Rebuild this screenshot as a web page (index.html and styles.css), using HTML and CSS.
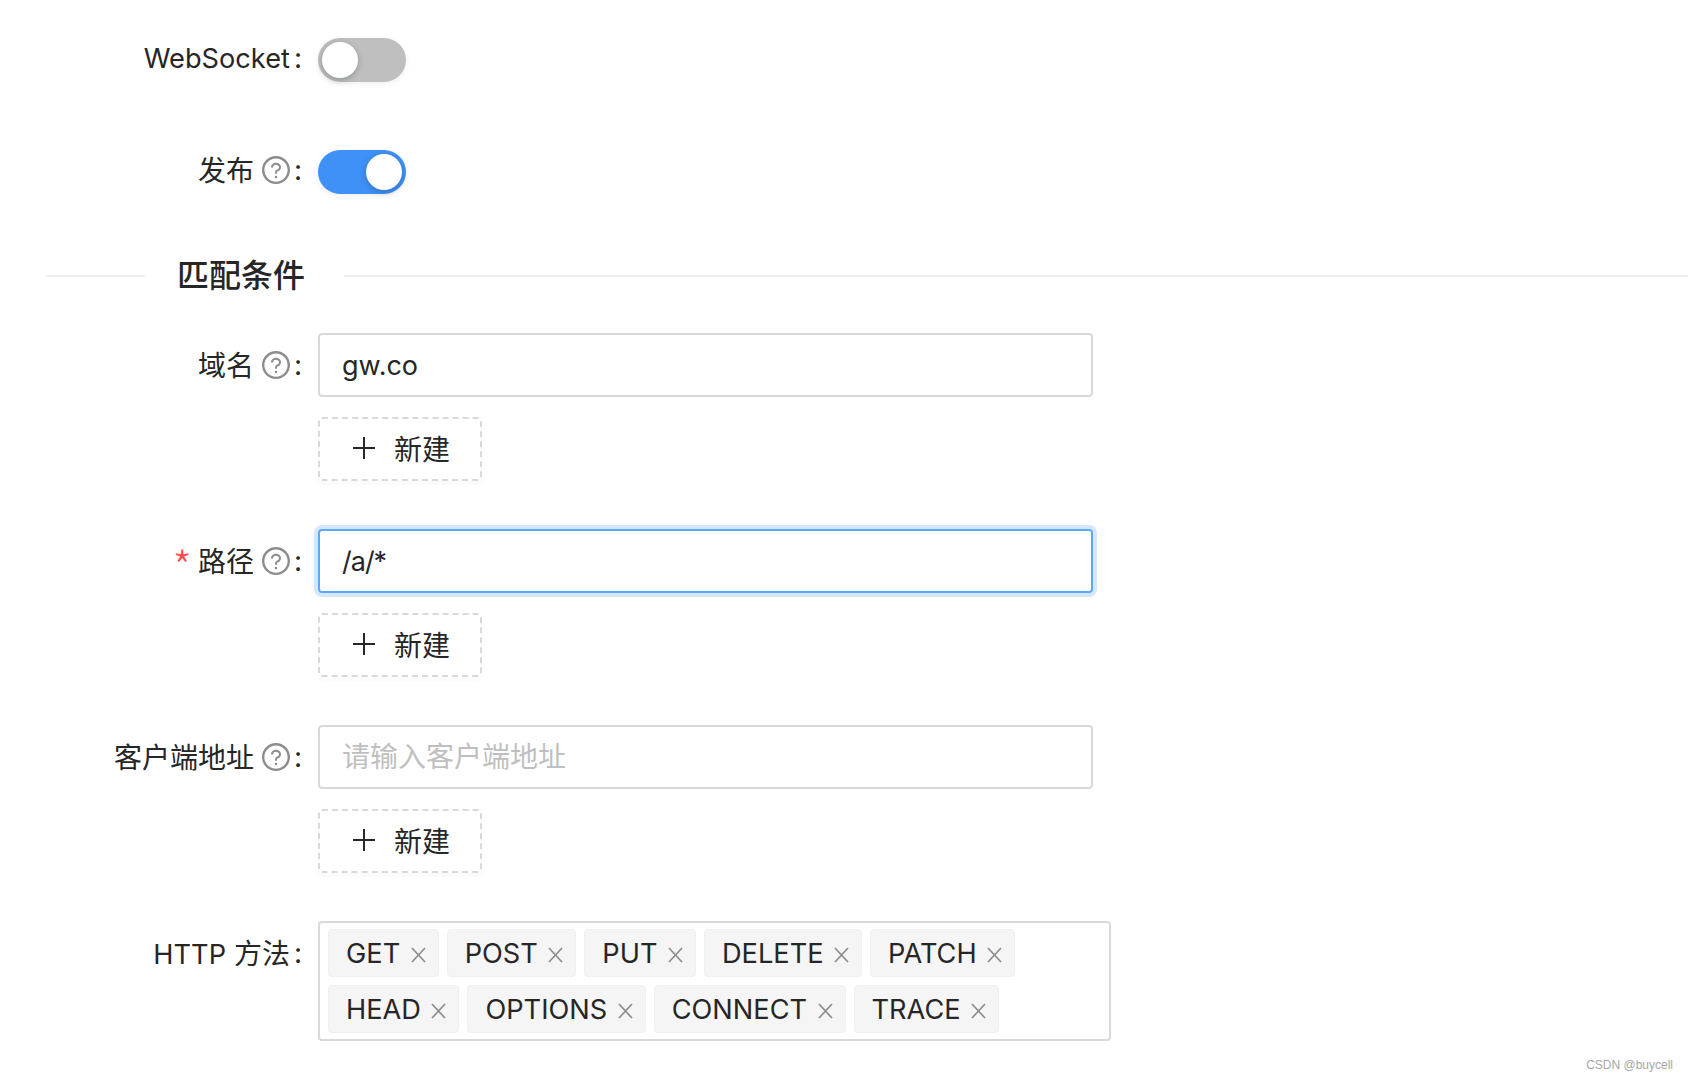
FILE: index.html
```html
<!DOCTYPE html>
<html lang="zh-CN">
<head>
<meta charset="utf-8">
<title>匹配条件</title>
<link rel="stylesheet" href="styles.css">
</head>
<body>
<svg class="sprite" aria-hidden="true">
  <symbol id="help" viewBox="64 64 896 896">
    <path d="M512 64C264.6 64 64 264.6 64 512s200.6 448 448 448 448-200.6 448-448S759.4 64 512 64zm0 820c-205.4 0-372-166.6-372-372s166.6-372 372-372 372 166.6 372 372-166.6 372-372 372z"/>
    <path d="M623.6 316.7C593.6 290.4 554 276 512 276s-81.6 14.5-111.6 40.7C369.2 344 352 380.7 352 420v7.6c0 4.4 3.6 8 8 8h48c4.4 0 8-3.6 8-8V420c0-44.1 43.1-80 96-80s96 35.9 96 80c0 31.1-22 59.6-56.1 72.7-21.2 8.1-39.2 22.3-52.1 40.9-13.1 19-19.9 41.8-19.9 64.9V620c0 4.4 3.6 8 8 8h48c4.4 0 8-3.6 8-8v-22.7a48.3 48.3 0 0 1 30.9-44.8c59-22.7 97.1-74.7 97.1-132.5.1-39.3-17.1-76-48.3-103.3z"/>
    <path d="M472 732a40 40 0 1 0 80 0 40 40 0 1 0-80 0z"/>
  </symbol>
  <symbol id="plus" viewBox="0 0 22 22"><path d="M11 0v22M0 11h22"/></symbol>
  <symbol id="close" viewBox="0 0 15 16"><path d="M1 1l13 14M14 1L1 15"/></symbol>
</svg>

<main class="form">
  <div class="row switch-row">
    <div class="label"><span class="latin">WebSocket</span><span class="colon">:</span></div>
    <div class="control"><span class="switch"><span class="knob"></span></span></div>
  </div>
  <div class="row switch-row">
    <div class="label"><span class="cjk">发布</span><svg class="help"><use href="#help"/></svg><span class="colon">:</span></div>
    <div class="control"><span class="switch on"><span class="knob"></span></span></div>
  </div>

  <div class="divider"><span class="rule rule-left"></span><span class="divider-title">匹配条件</span><span class="rule rule-right"></span></div>

  <div class="row">
    <div class="label"><span class="cjk">域名</span><svg class="help"><use href="#help"/></svg><span class="colon">:</span></div>
    <div class="control stack">
      <input class="input" type="text" value="gw.co">
      <button class="add" type="button"><svg class="plus"><use href="#plus"/></svg><span class="cjk">新建</span></button>
    </div>
  </div>
  <div class="row">
    <div class="label"><span class="required">*</span><span class="cjk">路径</span><svg class="help"><use href="#help"/></svg><span class="colon">:</span></div>
    <div class="control stack">
      <input class="input focused" type="text" value="/a/*">
      <button class="add" type="button"><svg class="plus"><use href="#plus"/></svg><span class="cjk">新建</span></button>
    </div>
  </div>
  <div class="row">
    <div class="label"><span class="cjk">客户端地址</span><svg class="help"><use href="#help"/></svg><span class="colon">:</span></div>
    <div class="control stack">
      <input class="input" type="text" placeholder="请输入客户端地址">
      <button class="add" type="button"><svg class="plus"><use href="#plus"/></svg><span class="cjk">新建</span></button>
    </div>
  </div>
  <div class="row last">
    <div class="label"><span class="cjk"><span class="latin">HTTP</span> 方法</span><span class="colon">:</span></div>
    <div class="control">
      <div class="tags">
        <span class="tag">GET<svg class="x"><use href="#close"/></svg></span>
        <span class="tag">POST<svg class="x"><use href="#close"/></svg></span>
        <span class="tag">PUT<svg class="x"><use href="#close"/></svg></span>
        <span class="tag">DELETE<svg class="x"><use href="#close"/></svg></span>
        <span class="tag">PATCH<svg class="x"><use href="#close"/></svg></span>
        <span class="tag">HEAD<svg class="x"><use href="#close"/></svg></span>
        <span class="tag">OPTIONS<svg class="x"><use href="#close"/></svg></span>
        <span class="tag">CONNECT<svg class="x"><use href="#close"/></svg></span>
        <span class="tag">TRACE<svg class="x"><use href="#close"/></svg></span>
      </div>
    </div>
  </div>
</main>
<div class="watermark">CSDN @buycell</div>
</body>
</html>
```
FILE: styles.css
```css
* { box-sizing: border-box; }
html, body { margin: 0; height: 100%; background: #fff; overflow: hidden; }
body {
  position: relative;
  font-family: Inter, "Noto Sans CJK SC", sans-serif;
  font-size: 28px;
  color: #262626;
}
.sprite { display: none; }
.latin { font-size: 27.2px; }
.cjk { padding-bottom: 2px; }

.form { padding: 28px 0 0 46px; }
.row {
  display: grid;
  grid-template-columns: 272px 1fr;
  margin-bottom: 48px;
}
.row.last { margin-bottom: 0; }
.switch-row { margin-bottom: 52px; }

.label {
  display: flex;
  justify-content: flex-end;
  align-items: center;
  height: 64px;
  padding-right: 16px;
  white-space: nowrap;
}
.switch-row .label { height: 60px; }
.colon { margin-left: 4px; }
.required {
  margin-right: 6px;
  padding-top: 8px;
  font-family: "Noto Sans CJK SC", sans-serif;
  font-size: 44px;
  font-weight: 300;
  line-height: 1;
  color: #ff4d4f;
}
.help { width: 28px; height: 28px; margin-left: 8px; fill: #8c8c8c; }

.switch {
  display: block;
  position: relative;
  width: 88px;
  height: 44px;
  margin-top: 10px;
  border-radius: 22px;
  background: #bfbfbf;
  box-shadow: 0 2px 6px rgba(0, 0, 0, .06);
}
.switch.on { background: #3f90f7; }
.knob {
  position: absolute;
  top: 4px;
  left: 4px;
  width: 36px;
  height: 36px;
  border-radius: 50%;
  background: #fff;
  box-shadow: 0 2px 6px rgba(0, 35, 11, .25);
}
.switch.on .knob { left: 48px; }

.divider {
  display: flex;
  align-items: center;
  height: 48px;
  margin-bottom: 33px;
}
.rule { height: 2px; background: #f0f0f0; }
.rule-left { width: 99px; }
.rule-right { flex: 1; }
.divider-title {
  padding: 0 39px 0 32px;
  font-size: 32px;
  font-weight: 500;
  line-height: 48px;
}

.stack { display: flex; flex-direction: column; align-items: flex-start; gap: 20px; }
.input {
  display: block;
  width: 775px;
  height: 64px;
  padding: 0 22px;
  border: 2px solid #d9d9d9;
  border-radius: 4px;
  background: #fff;
  outline: none;
  font: inherit;
  font-size: 27px;
  color: inherit;
}
.input::placeholder { color: #bfbfbf; opacity: 1; font-size: 28px; }
.input.focused {
  border-color: #5aa9fb;
  box-shadow: 0 0 0 4px #d6e6fd;
  letter-spacing: -1px;
}

.add {
  display: flex;
  align-items: center;
  gap: 19px;
  width: 164px;
  height: 64px;
  padding: 0 0 0 33px;
  border: 2px dashed #d9d9d9;
  border-radius: 4px;
  background: #fff;
  box-shadow: 0 4px 0 rgba(0, 0, 0, .015);
  font: inherit;
  color: inherit;
}
.plus { width: 22px; height: 22px; margin-top: -2px; fill: none; stroke: #262626; stroke-width: 2; }

.tags {
  display: flex;
  flex-wrap: wrap;
  align-content: flex-start;
  gap: 8px;
  width: 793px;
  height: 120px;
  padding: 6px 8px;
  border: 2px solid #d9d9d9;
  border-radius: 4px;
}
.tag {
  display: inline-flex;
  align-items: center;
  height: 48px;
  padding: 0 12px 0 17px;
  border: 1px solid #f0f0f0;
  border-radius: 4px;
  background: #f5f5f5;
  font-size: 27.2px;
}
.x {
  width: 15px;
  height: 16px;
  margin: 4px 0 0 10.5px;
  fill: none;
  stroke: #8c8c8c;
  stroke-width: 1.7;
}

.watermark {
  position: absolute;
  right: 15px;
  bottom: 10px;
  font-family: "Liberation Sans", sans-serif;
  font-size: 12px;
  line-height: 14px;
  color: #a6a6a6;
}
```
